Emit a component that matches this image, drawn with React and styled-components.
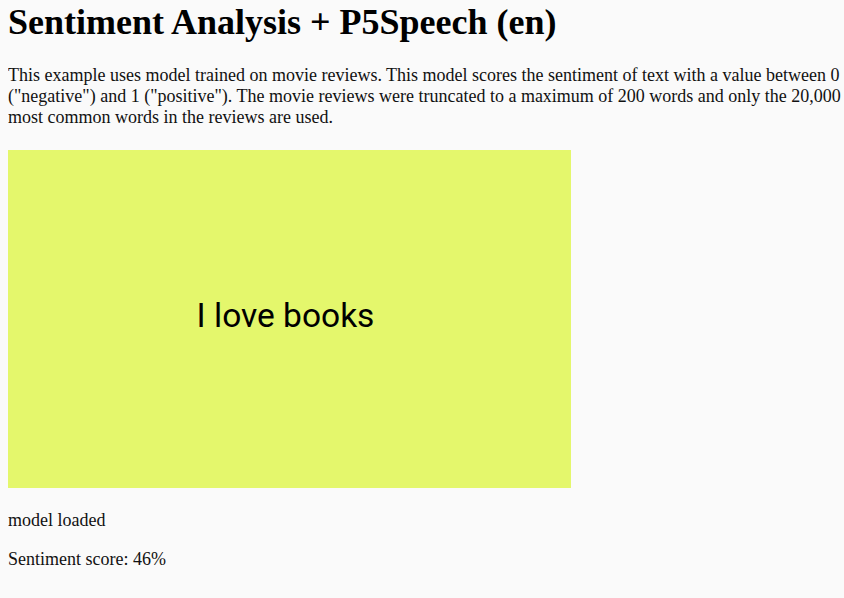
import React from 'react';
import styled, { createGlobalStyle } from 'styled-components';

const GlobalStyle = createGlobalStyle`
  html, body {
    background: #fafafa;
  }
  body {
    margin: 0 0 0 8px;
    font-family: "Liberation Serif", "Times New Roman", serif;
    color: #111;
  }
`;

const Page = styled.div`
  display: flex;
  flex-direction: column;
  padding-top: 1px;
`;

const Title = styled.h1`
  font-size: 36px;
  font-weight: bold;
  margin: 0 0 22px 0;
  color: #000;
`;

const Text = styled.p`
  font-size: 18px;
  margin: 0 0 ${(props) => props.gap || 0}px 0;
`;

const Sketch = styled.div`
  width: 563px;
  height: 338px;
  background: rgb(228, 247, 108);
  display: flex;
  align-items: center;
  justify-content: center;
  margin-bottom: 22px;
`;

const SketchText = styled.span`
  font-family: Roboto, "Liberation Sans", sans-serif;
  font-size: 33.5px;
  color: #000;
  margin-right: 8px;
  margin-top: -8px;
`;

export default function App() {
  return (
    <Page>
      <GlobalStyle />
      <Title>Sentiment Analysis + P5Speech (en)</Title>
      <Text gap={22}>
        This example uses model trained on movie reviews. This model scores the sentiment of text with a value
        between 0 ("negative") and 1 ("positive"). The movie reviews were truncated to a maximum of 200 words and
        only the 20,000 most common words in the reviews are used.
      </Text>
      <Sketch>
        <SketchText>I love books</SketchText>
      </Sketch>
      <Text gap={18}>model loaded</Text>
      <Text>Sentiment score: 46%</Text>
    </Page>
  );
}
